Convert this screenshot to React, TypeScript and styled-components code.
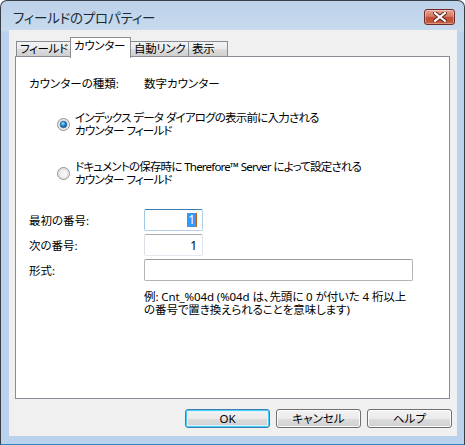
import styled, { createGlobalStyle } from 'styled-components';

const GlobalStyle = createGlobalStyle`
	html, body {
		margin: 0;
		padding: 0;
		background: #ffffff;
	}
	* {
		box-sizing: border-box;
	}
`;

const tabs = [
	{ label: 'フィールド', width: 55 },
	{ label: 'カウンター', width: 61, active: true },
	{ label: '自動リンク', width: 59 },
	{ label: '表示', width: 40 },
];

const RadioMark = ({ checked }: { checked?: boolean }) => (
	<svg width='13' height='13' viewBox='0 0 13 13'>
		<defs>
			<linearGradient id={checked ? 'rOn' : 'rOff'} x1='0' y1='0' x2='1' y2='1'>
				<stop offset='0' stopColor='#e8e8e8' />
				<stop offset='1' stopColor='#ffffff' />
			</linearGradient>
			<radialGradient id='dot' cx='0.4' cy='0.35' r='0.7'>
				<stop offset='0' stopColor='#9fe2ff' />
				<stop offset='0.5' stopColor='#1a8ad8' />
				<stop offset='1' stopColor='#0b4f8e' />
			</radialGradient>
		</defs>
		<circle cx='6.5' cy='6.5' r='6' fill={`url(#${checked ? 'rOn' : 'rOff'})`} stroke='#8e8f8f' />
		<circle cx='6.5' cy='6.5' r='4.6' fill='none' stroke='#d6d6d6' strokeWidth='1' />
		{checked && <circle cx='6.5' cy='6.5' r='3.3' fill='url(#dot)' stroke='#1b4f7d' strokeWidth='0.6' />}
	</svg>
);

const CloseIcon = () => (
	<svg width='14' height='10' viewBox='0 0 14 10'>
		<path d='M2 1 L12 9 M12 1 L2 9' stroke='#5a2018' strokeWidth='4' strokeLinecap='square' />
		<path d='M2 1 L12 9 M12 1 L2 9' stroke='#ffffff' strokeWidth='2.2' strokeLinecap='square' />
	</svg>
);

const App = () => {
	return (
		<>
			<GlobalStyle />
			<Window>
				<TitleBar>
					<TitleText>フィールドのプロパティー</TitleText>
					<CloseButton>
						<CloseIcon />
					</CloseButton>
				</TitleBar>
				<Client>
					<TabStrip>
						{tabs.map((t) => (
							<Tab key={t.label} $active={t.active} $width={t.width}>
								{t.label}
							</Tab>
						))}
					</TabStrip>
					<Panel>
						<TypeRow>
							<Label>カウンターの種類:</Label>
							<Value>数字カウンター</Value>
						</TypeRow>
						<RadioRow $top={21}>
							<RadioMark checked />
							<RadioText>
								<Line>インデックス データ ダイアログの表示前に入力される</Line>
								<Line>カウンター フィールド</Line>
							</RadioText>
						</RadioRow>
						<RadioRow $top={23}>
							<RadioMark />
							<RadioText>
								<Line>ドキュメントの保存時に Therefore™ Server によって設定される</Line>
								<Line>カウンター フィールド</Line>
							</RadioText>
						</RadioRow>
						<Fields>
							<FieldRow>
								<Label>最初の番号:</Label>
								<TextBox $width={59} $focused>
									<Selected>1</Selected>
									<Caret />
								</TextBox>
							</FieldRow>
							<FieldRow>
								<Label>次の番号:</Label>
								<TextBox $width={59}>1</TextBox>
							</FieldRow>
							<FieldRow>
								<Label>形式:</Label>
								<TextBox $width={269} $plain />
							</FieldRow>
						</Fields>
						<Hint>
							<Line>例: Cnt_%04d (%04d は、先頭に 0 が付いた 4 桁以上</Line>
							<Line>の番号で置き換えられることを意味します)</Line>
						</Hint>
					</Panel>
					<ButtonRow>
						<Button $default>OK</Button>
						<Button>キャンセル</Button>
						<Button>ヘルプ</Button>
					</ButtonRow>
				</Client>
			</Window>
		</>
	);
};

export default App;

const uiFont = `"Noto Sans", "Noto Sans CJK JP", sans-serif`;

const Window = styled.div`
	width: 465px;
	height: 445px;
	border: 1px solid #3a3f45;
	border-bottom-color: #2a8bc0;
	border-radius: 7px 7px 0 0;
	background: linear-gradient(180deg, #bcd2ea 0px, #c8daee 30px, #bad2ec 31px, #bad2ec 100%);
	display: flex;
	flex-direction: column;
	overflow: hidden;
	font-family: ${uiFont};
	font-feature-settings: 'palt';
	font-size: 11.5px;
	letter-spacing: 0;
	color: #000;
`;
const TitleBar = styled.div`
	height: 29px;
	display: flex;
	align-items: center;
	justify-content: space-between;
	padding: 0 9px 0 12px;
`;
const TitleText = styled.div`
	font-size: 13.5px;
	letter-spacing: -0.2px;
	color: #1e2a36;
	margin-top: 2px;
`;
const CloseButton = styled.div`
	width: 31px;
	height: 16px;
	margin-top: 2px;
	border: 1px solid #6e2a24;
	border-radius: 3px;
	background: linear-gradient(180deg, #e8a493 0%, #d27a66 45%, #c24a33 55%, #c8603f 100%);
	box-shadow: inset 0 0 0 1px rgba(255, 255, 255, 0.35);
	display: flex;
	align-items: center;
	justify-content: center;
`;
const Client = styled.div`
	flex: 1;
	margin: 0 7px 8px 8px;
	background: #f0f0f0;
	display: flex;
	flex-direction: column;
	padding: 7px 7px 0 6px;
`;
const TabStrip = styled.div`
	display: flex;
	align-items: flex-end;
	height: 20px;
	padding-left: 2px;
	position: relative;
	z-index: 1;
`;
const Tab = styled.div<{ $active?: boolean; $width: number }>`
	width: ${({ $width }) => $width}px;
	height: ${({ $active }) => ($active ? 21 : 16)}px;
	margin-left: -1px;
	margin-bottom: ${({ $active }) => ($active ? -1 : 0)}px;
	border: 1px solid #898c95;
	border-bottom: ${({ $active }) => ($active ? 'none' : '1px solid #898c95')};
	background: ${({ $active }) =>
		$active ? '#ffffff' : 'linear-gradient(180deg, #f2f2f2 0%, #ebebeb 50%, #dddddd 51%, #cfcfcf 100%)'};
	line-height: ${({ $active }) => ($active ? 16 : 14)}px;
	padding-left: 3px;
	letter-spacing: -0.3px;
	white-space: nowrap;
	overflow: hidden;
	z-index: ${({ $active }) => ($active ? 2 : 1)};
`;
const Panel = styled.div`
	height: 343px;
	margin-top: -1px;
	background: #ffffff;
	border: 1px solid #898c95;
	display: flex;
	flex-direction: column;
	padding-left: 13px;
`;
const TypeRow = styled.div`
	display: flex;
	margin-top: 20px;
	line-height: 13px;
`;
const Label = styled.div`
	width: 115px;
	line-height: 13px;
`;
const Value = styled.div``;
const RadioRow = styled.div<{ $top: number }>`
	display: flex;
	align-items: center;
	gap: 5px;
	margin-top: ${({ $top }) => $top}px;
	padding-left: 28px;
`;
const RadioText = styled.div`
	display: flex;
	flex-direction: column;
	white-space: nowrap;
	letter-spacing: -0.8px;
	word-spacing: 0.5px;
`;
const Line = styled.div`
	height: 13px;
	line-height: 13px;
`;
const Fields = styled.div`
	display: flex;
	flex-direction: column;
	gap: 3px;
	margin-top: 23px;
`;
const FieldRow = styled.div`
	display: flex;
	align-items: center;
	height: 22px;
`;
const TextBox = styled.div<{ $width: number; $focused?: boolean; $plain?: boolean }>`
	width: ${({ $width }) => $width}px;
	height: 22px;
	border: 1px solid;
	border-color: ${({ $focused, $plain }) =>
		$focused ? '#3d7bad #b5cfe7 #b5cfe7 #a4c9e3' : $plain ? '#9a9a9a #b4b4b4 #b4b4b4 #b4b4b4' : '#abadb3 #e2e3ea #e3e9ef #dbdfe6'};
	border-radius: 2px;
	background: #fff;
	display: flex;
	align-items: center;
	justify-content: flex-end;
	padding-right: 5px;
	font-size: 12px;
	line-height: 13px;
`;
const Selected = styled.span`
	background: #3399ff;
	color: #fff;
	padding: 0 1px;
	line-height: 14px;
`;
const Caret = styled.span`
	width: 1px;
	height: 14px;
	background: #c06010;
`;
const Hint = styled.div`
	display: flex;
	flex-direction: column;
	margin: 9px 0 0 115px;
	white-space: nowrap;
	letter-spacing: -0.1px;
`;
const ButtonRow = styled.div`
	display: flex;
	justify-content: flex-end;
	gap: 6px;
	margin-top: 10px;
	margin-right: -2px;
`;
const Button = styled.div<{ $default?: boolean }>`
	width: 85px;
	height: 19px;
	border: 1px solid ${({ $default }) => ($default ? '#3c7fb1' : '#707070')};
	border-radius: 3px;
	background: linear-gradient(180deg, #f2f2f2 0%, #ebebeb 50%, #dddddd 51%, #cfcfcf 100%);
	box-shadow: ${({ $default }) =>
		$default ? 'inset 0 0 0 1px #48d0f7, inset 0 0 0 2px #dff3fb' : 'inset 0 0 0 1px #fcfcfc'};
	display: flex;
	align-items: center;
	justify-content: center;
	line-height: 13px;
`;
